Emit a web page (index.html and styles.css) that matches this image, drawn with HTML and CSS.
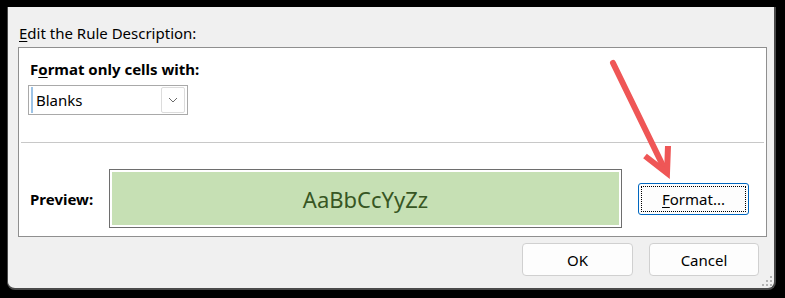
FILE: index.html
```html
<!DOCTYPE html>
<html>
<head>
  <title>Edit Formatting Rule</title>
  <link rel="stylesheet" href="styles.css">
</head>
<body>
  <div class="dialog">
    <p class="title"><u>E</u>dit the Rule Description:</p>

    <div class="panel">
      <div class="cells">
        <p class="heading">F<u>o</u>rmat only cells with:</p>
        <div class="select">
          <span class="caret"></span>
          <span class="select-text">Blanks</span>
          <span class="drop">
            <svg width="10" height="6" viewBox="0 0 10 6"><path d="M1 1 L5 5 L9 1" fill="none" stroke="#6b6b6b" stroke-width="1"/></svg>
          </span>
        </div>
      </div>

      <div class="sep"></div>

      <div class="preview-row">
        <span class="preview-label">Preview:</span>
        <div class="preview-box">
          <div class="preview-fill">AaBbCcYyZz</div>
        </div>
        <button class="btn format-btn"><span class="focus"><u>F</u>ormat...</span></button>
      </div>
    </div>

    <div class="footer">
      <button class="btn">OK</button>
      <button class="btn">Cancel</button>
    </div>

    <!-- resize grip -->
    <svg class="grip" width="11" height="11" viewBox="0 0 11 11">
      <rect x="8" y="0" width="2" height="2"/>
      <rect x="4" y="4" width="2" height="2"/>
      <rect x="8" y="4" width="2" height="2"/>
      <rect x="0" y="8" width="2" height="2"/>
      <rect x="4" y="8" width="2" height="2"/>
      <rect x="8" y="8" width="2" height="2"/>
    </svg>
  </div>

  <!-- annotation arrow -->
  <svg class="arrow" width="785" height="298" viewBox="0 0 785 298">
    <line x1="613" y1="63" x2="665" y2="170" stroke="#ef5656" stroke-width="6" stroke-linecap="round"/>
    <polyline points="645,156 667,173 668,146" fill="none" stroke="#ef5656" stroke-width="6" stroke-linejoin="miter" stroke-linecap="butt"/>
  </svg>
</body>
</html>
```

FILE: styles.css
```css
* {
  box-sizing: border-box;
}

html, body {
  margin: 0;
  padding: 0;
  background: #000;
  font-family: "Noto Sans", "Open Sans", sans-serif;
  font-size: 15px;
  color: #000;
}

body {
  width: 785px;
  height: 298px;
  position: relative;
  overflow: hidden;
  padding: 7px 9px 8px 7px;
}

.dialog {
  position: relative;
  width: 769px;
  height: 283px;
  background: #f0f0f0;
  border-left: 1px solid #4a4a4a;
  border-right: 2px solid #4a4a4a;
  border-bottom: 2px solid #4a4a4a;
  border-radius: 0 0 8px 8px;
  padding: 16px 0 0 0;
}

p {
  margin: 0;
}

u {
  text-decoration: underline;
  text-underline-offset: 2px;
}

.title {
  line-height: 20px;
  padding-left: 11px;
}

.panel {
  margin: 4px 7px 0 10px;
  height: 190px;
  background: #fff;
  border: 1px solid #8f8f8f;
}

.cells {
  padding: 11px 0 0 9px;
}

.heading {
  font-weight: bold;
  line-height: 20px;
  padding-left: 2px;
}

.select {
  margin-top: 6px;
  width: 160px;
  height: 30px;
  border: 1px solid #a9a9a9;
  display: flex;
  align-items: center;
  padding: 1px 2px 1px 2px;
}

.caret {
  width: 2px;
  height: 26px;
  background: #9cc3e6;
  margin-right: 3px;
}

.select-text {
  flex: 1;
}

.drop {
  width: 24px;
  height: 26px;
  border: 1px solid #dcdcdc;
  border-radius: 2px;
  display: flex;
  align-items: center;
  justify-content: center;
}

.sep {
  margin: 27px 2px 0 2px;
  height: 1px;
  background: #c8c8c8;
}

.preview-row {
  display: flex;
  align-items: center;
  margin-top: 26px;
  padding-left: 11px;
}

.preview-label {
  font-weight: bold;
  width: 79px;
}

.preview-box {
  width: 513px;
  height: 59px;
  border: 1px solid #6e6e6e;
  padding: 2px;
}

.preview-fill {
  height: 100%;
  background: #c6e0b4;
  color: #375623;
  font-size: 22px;
  display: flex;
  align-items: center;
  justify-content: center;
}

.btn {
  font-family: inherit;
  font-size: 15px;
  color: #000;
  background: #fdfdfd;
  border: 1px solid #d0d0d0;
  border-radius: 4px;
  width: 111px;
  height: 33px;
  padding: 0;
}

.format-btn {
  margin-left: 16px;
  height: 32px;
  border: 1px solid #0067c0;
  border-radius: 3px;
  padding: 2px;
  background: #fdfdfd;
}

.focus {
  display: flex;
  align-items: center;
  justify-content: center;
  height: 100%;
  border: 1px dotted #000;
}

.footer {
  display: flex;
  justify-content: flex-end;
  gap: 16px;
  margin-top: 6px;
  padding-right: 15px;
}

.footer .btn:last-child {
  width: 110px;
}

.grip {
  position: absolute;
  right: 1px;
  bottom: 1px;
  fill: #b4b4b4;
}

.arrow {
  position: absolute;
  left: 0;
  top: 0;
  pointer-events: none;
}
```
